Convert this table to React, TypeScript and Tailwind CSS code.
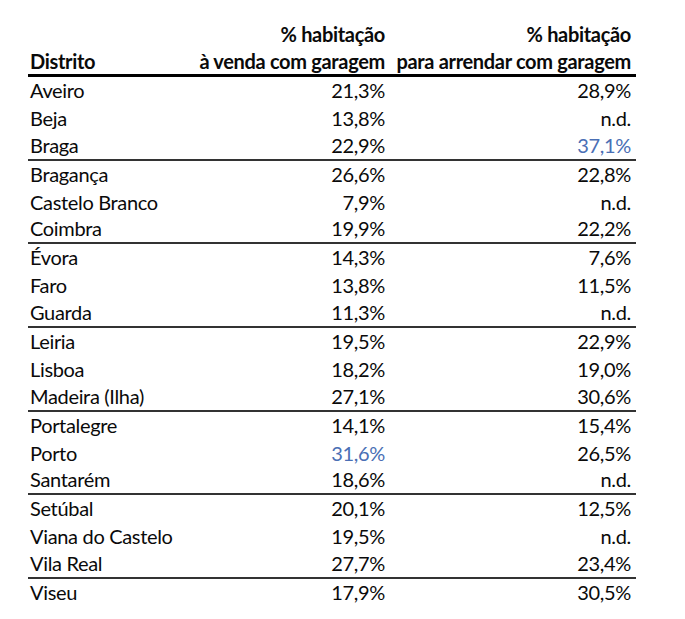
const rows: Array<{ name: string; sale: string; rent: string; saleBlue?: boolean; rentBlue?: boolean }> = [
  { name: "Aveiro", sale: "21,3%", rent: "28,9%" },
  { name: "Beja", sale: "13,8%", rent: "n.d." },
  { name: "Braga", sale: "22,9%", rent: "37,1%", rentBlue: true },
  { name: "Bragança", sale: "26,6%", rent: "22,8%" },
  { name: "Castelo Branco", sale: "7,9%", rent: "n.d." },
  { name: "Coimbra", sale: "19,9%", rent: "22,2%" },
  { name: "Évora", sale: "14,3%", rent: "7,6%" },
  { name: "Faro", sale: "13,8%", rent: "11,5%" },
  { name: "Guarda", sale: "11,3%", rent: "n.d." },
  { name: "Leiria", sale: "19,5%", rent: "22,9%" },
  { name: "Lisboa", sale: "18,2%", rent: "19,0%" },
  { name: "Madeira (Ilha)", sale: "27,1%", rent: "30,6%" },
  { name: "Portalegre", sale: "14,1%", rent: "15,4%" },
  { name: "Porto", sale: "31,6%", rent: "26,5%", saleBlue: true },
  { name: "Santarém", sale: "18,6%", rent: "n.d." },
  { name: "Setúbal", sale: "20,1%", rent: "12,5%" },
  { name: "Viana do Castelo", sale: "19,5%", rent: "n.d." },
  { name: "Vila Real", sale: "27,7%", rent: "23,4%" },
  { name: "Viseu", sale: "17,9%", rent: "30,5%" },
];

export default function App() {
  return (
    <div className="w-[685px] h-[619px] bg-white pt-[20px] pl-[28px] text-[#0a0a0a] text-[20px] leading-none tracking-[-0.33px] font-['Lato','Liberation_Sans',sans-serif]">
      <div className="w-[608px]">
        {/* Header */}
        <div className="grid grid-cols-[162px_198px_248px] font-bold tracking-[-0.32px] border-b-[3px] border-black">
          <div className="h-[27px]" />
          <div className="h-[27px] flex items-center justify-end pr-[3px]">% habitação</div>
          <div className="h-[27px] flex items-center justify-end pr-[5px]">% habitação</div>
          <div className="h-[27px] flex items-center pl-[2px]">Distrito</div>
          <div className="h-[27px] flex items-center justify-end pr-[3px] whitespace-nowrap">à venda com garagem</div>
          <div className="h-[27px] flex items-center justify-end pr-[5px] whitespace-nowrap">para arrendar com garagem</div>
        </div>

        {rows.map((r, i) => {
          const groupEnd = i % 3 === 2 && i !== rows.length - 1;
          return (
            <div
              key={r.name}
              className={`grid grid-cols-[162px_198px_248px] h-[27.9px] pb-[2px] ${groupEnd ? "border-b-2 border-[#333]" : ""}`}
            >
              <div className="flex items-center pl-[2px] whitespace-nowrap">{r.name}</div>
              <div className={`flex items-center justify-end pr-[3px] ${r.saleBlue ? "text-[#4a6fb5]" : ""}`}>{r.sale}</div>
              <div className={`flex items-center justify-end pr-[5px] ${r.rentBlue ? "text-[#4a6fb5]" : ""}`}>{r.rent}</div>
            </div>
          );
        })}
      </div>
    </div>
  );
}
